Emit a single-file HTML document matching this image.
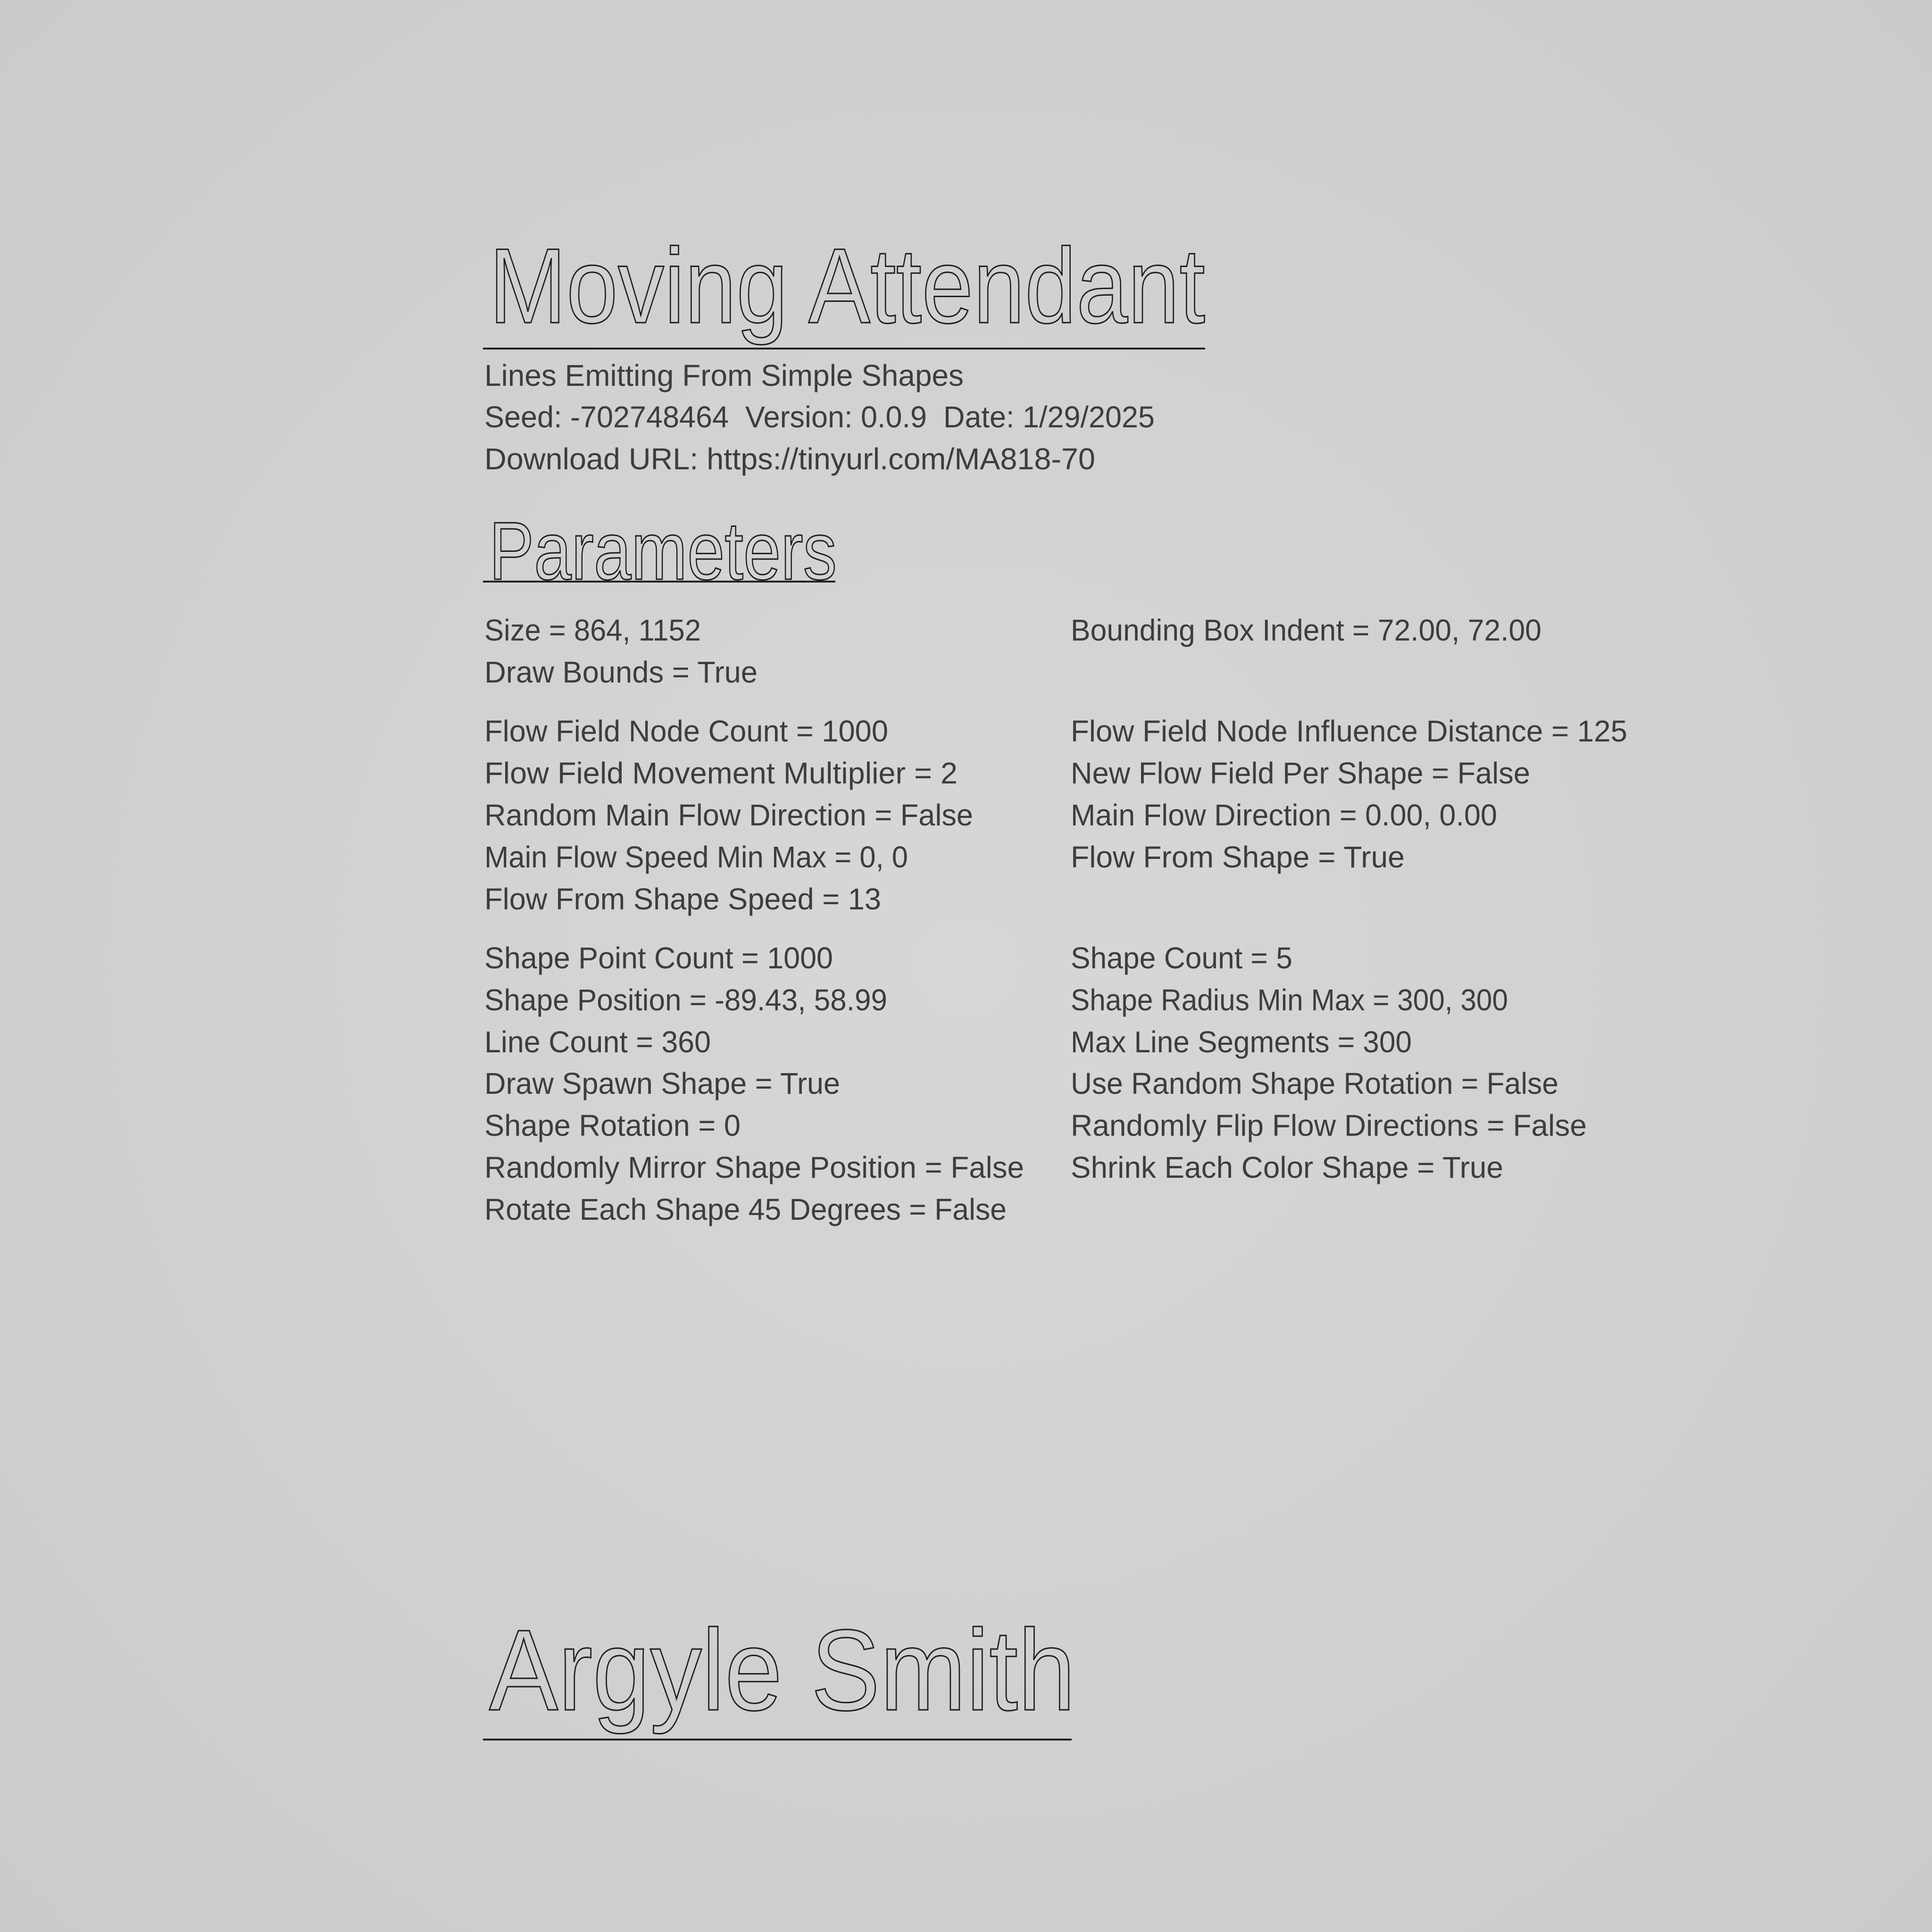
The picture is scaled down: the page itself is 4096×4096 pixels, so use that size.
<!DOCTYPE html>
<html><head><meta charset="utf-8"><style>
html,body{margin:0;padding:0;width:4096px;height:4096px;overflow:hidden}
svg{display:block}
.big{font-family:"Liberation Sans",sans-serif;fill:none;stroke:#1e1e1e;stroke-width:3}
.s{font-family:"Liberation Sans",sans-serif;font-size:64px;fill:#3d3d3d}
</style></head><body>
<svg width="4096" height="4096" viewBox="0 0 4096 4096" xmlns="http://www.w3.org/2000/svg">
<defs><radialGradient id="g" cx="50%" cy="50%" r="70%">
<stop offset="0" stop-color="#d7d7d7"/><stop offset="1" stop-color="#cbcbcb"/></radialGradient></defs>
<rect width="4096" height="4096" fill="url(#g)"/>
<text class="big" x="1037" y="684" font-size="226" textLength="1518" lengthAdjust="spacingAndGlyphs">Moving Attendant</text>
<rect x="1024" y="737" width="1531" height="4" fill="#222"/>
<g class="s">
<text x="1027" y="818" textLength="1016" lengthAdjust="spacingAndGlyphs">Lines Emitting From Simple Shapes</text>
<text x="1027" y="906" textLength="1421" lengthAdjust="spacingAndGlyphs" xml:space="preserve">Seed: -702748464  Version: 0.0.9  Date: 1/29/2025</text>
<text x="1027" y="995" textLength="1295" lengthAdjust="spacingAndGlyphs">Download URL: https://tinyurl.com/MA818-70</text>
</g>
<text class="big" x="1037" y="1228" font-size="174" textLength="737" lengthAdjust="spacingAndGlyphs">Parameters</text>
<rect x="1024" y="1231" width="747" height="4" fill="#222"/>
<g class="s">
<text x="1027" y="1358" textLength="459" lengthAdjust="spacingAndGlyphs">Size = 864, 1152</text>
<text x="1027" y="1447" textLength="579" lengthAdjust="spacingAndGlyphs">Draw Bounds = True</text>
<text x="1027" y="1572" textLength="856" lengthAdjust="spacingAndGlyphs">Flow Field Node Count = 1000</text>
<text x="1027" y="1661" textLength="1003" lengthAdjust="spacingAndGlyphs">Flow Field Movement Multiplier = 2</text>
<text x="1027" y="1750" textLength="1036" lengthAdjust="spacingAndGlyphs">Random Main Flow Direction = False</text>
<text x="1027" y="1839" textLength="898" lengthAdjust="spacingAndGlyphs">Main Flow Speed Min Max = 0, 0</text>
<text x="1027" y="1928" textLength="841" lengthAdjust="spacingAndGlyphs">Flow From Shape Speed = 13</text>
<text x="1027" y="2053" textLength="739" lengthAdjust="spacingAndGlyphs">Shape Point Count = 1000</text>
<text x="1027" y="2142" textLength="854" lengthAdjust="spacingAndGlyphs">Shape Position = -89.43, 58.99</text>
<text x="1027" y="2231" textLength="480" lengthAdjust="spacingAndGlyphs">Line Count = 360</text>
<text x="1027" y="2319" textLength="754" lengthAdjust="spacingAndGlyphs">Draw Spawn Shape = True</text>
<text x="1027" y="2408" textLength="543" lengthAdjust="spacingAndGlyphs">Shape Rotation = 0</text>
<text x="1027" y="2497" textLength="1144" lengthAdjust="spacingAndGlyphs">Randomly Mirror Shape Position = False</text>
<text x="1027" y="2586" textLength="1107" lengthAdjust="spacingAndGlyphs">Rotate Each Shape 45 Degrees = False</text>

<text x="2270" y="1358" textLength="998" lengthAdjust="spacingAndGlyphs">Bounding Box Indent = 72.00, 72.00</text>
<text x="2270" y="1572" textLength="1180" lengthAdjust="spacingAndGlyphs">Flow Field Node Influence Distance = 125</text>
<text x="2270" y="1661" textLength="974" lengthAdjust="spacingAndGlyphs">New Flow Field Per Shape = False</text>
<text x="2270" y="1750" textLength="904" lengthAdjust="spacingAndGlyphs">Main Flow Direction = 0.00, 0.00</text>
<text x="2270" y="1839" textLength="708" lengthAdjust="spacingAndGlyphs">Flow From Shape = True</text>
<text x="2270" y="2053" textLength="470" lengthAdjust="spacingAndGlyphs">Shape Count = 5</text>
<text x="2270" y="2142" textLength="927" lengthAdjust="spacingAndGlyphs">Shape Radius Min Max = 300, 300</text>
<text x="2270" y="2231" textLength="723" lengthAdjust="spacingAndGlyphs">Max Line Segments = 300</text>
<text x="2270" y="2319" textLength="1034" lengthAdjust="spacingAndGlyphs">Use Random Shape Rotation = False</text>
<text x="2270" y="2408" textLength="1094" lengthAdjust="spacingAndGlyphs">Randomly Flip Flow Directions = False</text>
<text x="2270" y="2497" textLength="917" lengthAdjust="spacingAndGlyphs">Shrink Each Color Shape = True</text>
</g>
<text class="big" x="1037" y="3625" font-size="244" textLength="1243" lengthAdjust="spacingAndGlyphs">Argyle Smith</text>
<rect x="1024" y="3686" width="1248" height="4" fill="#222"/>
</svg>
</body></html>
